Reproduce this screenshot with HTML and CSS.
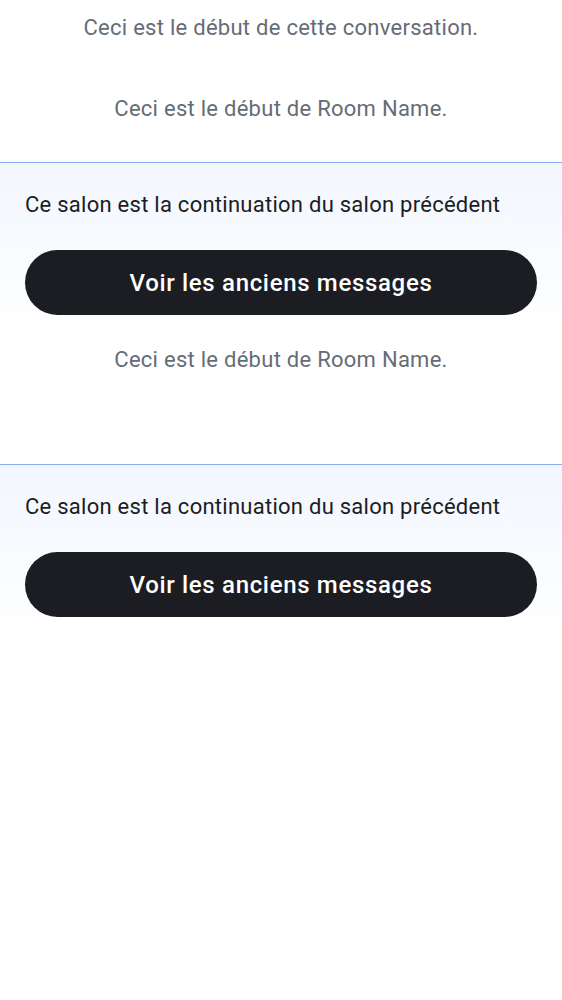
FILE: index.html
```html
<!DOCTYPE html>
<html lang="fr">
<head>
<meta charset="utf-8">
<link rel="stylesheet" href="styles.css">
</head>
<body>
<div class="timeline">
  <p class="notice first">Ceci est le début de cette conversation.</p>
  <p class="notice second">Ceci est le début de Room Name.</p>
  <section class="predecessor">
    <p class="pred-text">Ce salon est la continuation du salon précédent</p>
    <button class="pred-btn">Voir les anciens messages</button>
    <p class="notice after">Ceci est le début de Room Name.</p>
  </section>
  <section class="predecessor">
    <p class="pred-text">Ce salon est la continuation du salon précédent</p>
    <button class="pred-btn">Voir les anciens messages</button>
  </section>
</div>
</body>
</html>
```
FILE: styles.css
```css
html, body {
  margin: 0;
  padding: 0;
  background: #ffffff;
}
body {
  font-family: Roboto, "Noto Sans", sans-serif;
  width: 562px;
  min-height: 1000px;
}
.timeline {
  display: flex;
  flex-direction: column;
}
.notice {
  margin: 0;
  text-align: center;
  font-size: 22px;
  line-height: 28px;
  letter-spacing: 0.27px;
  color: #656c76;
}
.notice.first {
  margin-top: 14px;
}
.notice.second {
  margin-top: 53px;
  margin-bottom: 39px;
}
.predecessor {
  border-top: 1px solid #86aef5;
  background: linear-gradient(to bottom, #f2f6fe 0px, #ffffff 170px);
  padding: 28px 25px 0 25px;
  display: flex;
  flex-direction: column;
}
.pred-text {
  margin: 0;
  font-size: 22px;
  line-height: 28px;
  letter-spacing: 0.26px;
  color: #1b1d22;
}
.pred-btn {
  margin-top: 31px;
  height: 65px;
  border: none;
  border-radius: 33px;
  background: #1b1d22;
  color: #ffffff;
  font-family: Roboto, "Noto Sans", sans-serif;
  font-size: 24px;
  font-weight: 500;
  letter-spacing: 0.67px;
  padding: 0;
}
.notice.after {
  margin-top: 31px;
  margin-bottom: 90px;
}
```
